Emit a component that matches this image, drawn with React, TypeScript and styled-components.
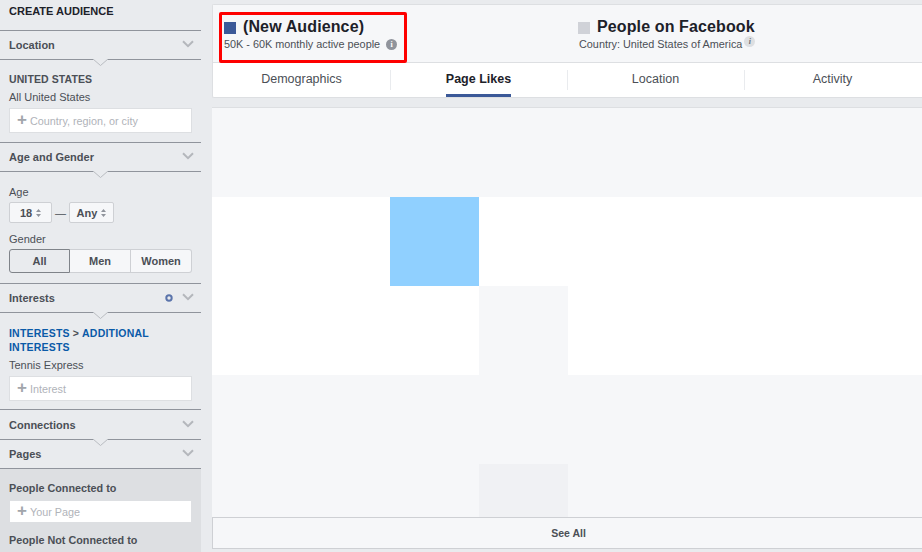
import React from "react";
import styled, { createGlobalStyle } from "styled-components";

const Global = createGlobalStyle`
  html, body { margin: 0; padding: 0; background: #e9ebee; }
  body { font-family: "Liberation Sans", Arial, sans-serif; color: #4b4f56; overflow: hidden; }
  * { box-sizing: border-box; }
`;
const Page = styled.div`
  display: flex; width: 922px; height: 552px; overflow: hidden; background: #e9ebee;
`;
const Sidebar = styled.aside`
  width: 201px; flex: none; height: 552px; overflow: hidden; background: #e9ebee;
`;
const Title = styled.div`
  height: 30px; padding: 4px 9px 0; font-size: 11px; line-height: 14px; font-weight: 700; color: #1d2129;
`;
const SectionHead = styled.div<{ $h?: number }>`
  position: relative; height: ${p => p.$h ?? 30}px; border-top: 1px solid #90949c; border-bottom: 1px solid #90949c;
  display: flex; align-items: center; padding: 0 7px 0 9px; gap: 10px; background: #e9ebee;
  margin-bottom: -1px;
`;
const SectionName = styled.span`
  flex: 1; font-size: 11px; font-weight: 700; color: #4b4f56;
`;
const Notch = styled.svg`
  position: absolute; left: 93px; bottom: -7px; width: 15px; height: 7px; z-index: 1;
`;
const Chevron = styled.svg`
  width: 12px; height: 8px; flex: none; margin-top: -2px;
`;
const Dot = styled.svg`
  width: 8px; height: 8px; flex: none; margin-right: -1px;
`;
const Body = styled.div<{ $pt: number; $h: number; $grey?: boolean }>`
  height: ${p => p.$h}px; padding: ${p => p.$pt}px 9px 0;
  background: ${p => (p.$grey ? "#dddfe2" : "transparent")};
`;
const Caps = styled.div`
  font-size: 10.5px; line-height: 14px; font-weight: 700; letter-spacing: 0.1px; color: #4b4f56;
`;
const Crumbs = styled.div`
  display: flex; flex-wrap: wrap; column-gap: 3px; width: 183px;
  font-size: 10.5px; line-height: 14px; font-weight: 700; letter-spacing: 0.2px; color: #0a5aa8;
`;
const CrumbSep = styled.span`color: #4b4f56;`;
const Label = styled.div<{ $mt?: number; $strong?: boolean }>`
  font-size: ${p => (p.$strong ? 10.8 : 11)}px; line-height: 14px; margin-top: ${p => p.$mt ?? 0}px; color: #4b4f56;
  font-weight: ${p => (p.$strong ? 700 : 400)};
`;
const Input = styled.div<{ $mt?: number; $h?: number }>`
  width: 183px; height: ${p => p.$h ?? 25}px; margin-top: ${p => p.$mt ?? 4}px; background: #fff;
  border: 1px solid #dddfe2;
  display: flex; align-items: center; padding-left: 6px; gap: 2px;
`;
const Plus = styled.span`
  font-size: 17px; font-weight: 700; line-height: 15px; color: #a2a5ab; width: 12px; text-align: center; margin-top: -3px;
`;
const Placeholder = styled.span`
  font-size: 10.8px; color: #b0b3b9;
`;
const AgeRow = styled.div`
  display: flex; align-items: center; margin-top: 3px; height: 21px;
`;
const Select = styled.div<{ $w: number }>`
  width: ${p => p.$w}px; height: 21px; background: #f6f7f9; border: 1px solid #ced0d4; border-radius: 2px;
  display: flex; align-items: center; justify-content: center; gap: 4px;
  font-size: 11px; font-weight: 700; color: #4b4f56;
`;
const Updown = styled.svg`width: 5px; height: 8px;`;
const Dash = styled.span`
  width: 17px; text-align: center; font-size: 11px; color: #4b4f56;
`;
const Segments = styled.div`
  display: flex; width: 183px; height: 24px; margin-top: 3px;
`;
const Segment = styled.div<{ $on?: boolean; $w: number; $first?: boolean; $last?: boolean }>`
  width: ${p => p.$w}px; display: flex; align-items: center; justify-content: center;
  font-size: 11px; font-weight: 700; color: #4b4f56;
  background: ${p => (p.$on ? "#e9ebee" : "#f6f7f9")};
  border: 1px solid ${p => (p.$on ? "#7f8389" : "#ced0d4")};
  border-left-width: ${p => (p.$first ? 1 : 0)}px;
  border-radius: ${p => (p.$first ? "3px 0 0 3px" : p.$last ? "0 3px 3px 0" : "0")};
`;
const Main = styled.main`
  width: 710px; margin-left: 11px; flex: none; padding-top: 4px; display: flex; flex-direction: column;
`;
const TopCard = styled.section`
  height: 94px; border: 1px solid #dddfe2; border-right: 0; border-radius: 2px 0 0 2px; background: #fff;
`;
const Compare = styled.div`
  height: 58px; background: #f6f7f9; border-bottom: 1px solid #dddfe2; display: flex; position: relative;
`;
const OurBlock = styled.div`
  width: 188px; height: 51px; margin: 7px 0 0 6px; border: 3px solid #fe0000; border-radius: 2px; padding: 3px 0 0 2px;
`;
const OtherBlock = styled.div`
  margin: 10px 0 0 171px; padding-top: 3px;
`;
const LegendTop = styled.div`
  display: flex; align-items: center; gap: 7px; height: 20px;
`;
const Swatch = styled.span<{ $c: string }>`
  width: 12px; height: 12px; background: ${p => p.$c}; flex: none;
`;
const Heading = styled.span`
  font-size: 16px; font-weight: 700; color: #1d2129; letter-spacing: 0.12px; margin-top: -2px;
`;
const Sub = styled.div<{ $shift?: boolean }>`
  display: flex; align-items: center; font-size: 10.85px; line-height: 14px; color: #4b4f56; margin-top: -1px; gap: 6px;
  padding-left: ${p => (p.$shift ? 1 : 0)}px;
`;
const Info = styled.span`
  width: 11px; height: 11px; border-radius: 50%; background: #90949c; color: #fff;
  font-size: 8px; line-height: 11px; font-weight: 700; text-align: center; font-family: "Liberation Serif", serif;
`;
const SmallInfo = styled.span`
  width: 11px; height: 11px; border-radius: 50%; background: #dddfe2; color: #6b6f76; margin: -5px 0 0 -4px;
  font-size: 8px; line-height: 11px; font-weight: 700; font-style: italic; text-align: center; font-family: "Liberation Serif", serif;
`;
const Tabs = styled.div`
  display: flex; height: 34px;
`;
const Tab = styled.div<{ $sep?: boolean }>`
  width: 177px; position: relative; display: flex; justify-content: center; padding-top: 8px;
  &::before {
    content: ${p => (p.$sep ? '""' : "none")};
    position: absolute; left: 0; top: 7px; height: 20px; width: 1px; background: #e9ebee;
  }
`;
const TabLabel = styled.span<{ $active?: boolean }>`
  height: 26px; font-size: 12.5px; line-height: 16px;
  font-weight: ${p => (p.$active ? 700 : 400)};
  color: ${p => (p.$active ? "#1d2129" : "#4b4f56")};
  border-bottom: ${p => (p.$active ? "3px solid #3b5998" : "0")};
`;
const Heat = styled.div`
  margin-top: 9px; height: 410px; border-top: 1px solid #dddfe2; display: grid; overflow: hidden;
  grid-template-columns: repeat(8, 89px); grid-auto-rows: 89px; width: 710px; background: #f6f7f9;
`;
const Cell = styled.div<{ $c: string }>`
  background: ${p => p.$c};
`;
const SeeAll = styled.div`
  height: 32px; border: 1px solid #ced0d4; border-right: 0; background: #f6f7f9;
  display: flex; align-items: center; justify-content: center; padding-left: 2px;
  font-size: 10.5px; font-weight: 700; color: #4b4f56;
`;

const Arrow = () => (
  <Chevron viewBox="0 0 12 8"><path d="M1 1.2 L6 6.2 L11 1.2" fill="none" stroke="#b4b7bc" strokeWidth="2" /></Chevron>
);
const Tip = () => (
  <Notch viewBox="0 0 15 7"><path d="M0 0 L7.5 6.5 L15 0 Z" fill="#e9ebee" /><path d="M0 0 L7.5 6.5 L15 0" fill="none" stroke="#b9bcc1" strokeWidth="1" /></Notch>
);
const Head = ({ name, open, h, dot }: { name: string; open?: boolean; h?: number; dot?: boolean }) => (
  <SectionHead $h={h}>
    <SectionName>{name}</SectionName>
    {dot && (
      <Dot viewBox="0 0 8 8"><circle cx="4" cy="4" r="2.7" fill="none" stroke="#5b74ab" strokeWidth="2" /></Dot>
    )}
    <Arrow />
    {open && <Tip />}
  </SectionHead>
);
const Field = ({ text, mt, h }: { text: string; mt?: number; h?: number }) => (
  <Input $mt={mt} $h={h}><Plus>+</Plus><Placeholder>{text}</Placeholder></Input>
);
const UpDown = () => (
  <Updown viewBox="0 0 5 8"><path d="M2.5 0 L5 3 H0 Z M2.5 8 L0 5 H5 Z" fill="#90949c" /></Updown>
);

const W = "#ffffff", G = "#f6f7f9", B = "#90d0ff", D = "#f0f1f4";
const rows = [
  [G, G, G, G, G, G, G, G],
  [W, W, B, W, W, W, W, W],
  [W, W, W, G, W, W, W, W],
  [G, G, G, G, G, G, G, G],
  [G, G, G, D, G, G, G, G],
];
const tabs = ["Demographics", "Page Likes", "Location", "Activity"];

export default function App() {
  return (
    <>
      <Global />
      <Page>
        <Sidebar>
          <Title>CREATE AUDIENCE</Title>
          <Head name="Location" open />
          <Body $pt={13} $h={83}>
            <Caps>UNITED STATES</Caps>
            <Label $mt={4}>All United States</Label>
            <Field text="Country, region, or city" />
          </Body>
          <Head name="Age and Gender" open />
          <Body $pt={14} $h={112}>
            <Label>Age</Label>
            <AgeRow>
              <Select $w={43}>18 <UpDown /></Select>
              <Dash>—</Dash>
              <Select $w={45}>Any <UpDown /></Select>
            </AgeRow>
            <Label $mt={9}>Gender</Label>
            <Segments>
              <Segment $w={61} $on $first>All</Segment>
              <Segment $w={61}>Men</Segment>
              <Segment $w={61} $last>Women</Segment>
            </Segments>
          </Body>
          <Head name="Interests" open dot />
          <Body $pt={14} $h={97}>
            <Crumbs>
              <span>INTERESTS</span>
              <CrumbSep>&gt;</CrumbSep>
              <span>ADDITIONAL</span>
              <span>INTERESTS</span>
            </Crumbs>
            <Label $mt={4}>Tennis Express</Label>
            <Field text="Interest" />
          </Body>
          <Head name="Connections" open h={31} />
          <Head name="Pages" />
          <Body $grey $pt={13} $h={84}>
            <Label $strong>People Connected to</Label>
            <Field text="Your Page" mt={5} h={23} />
            <Label $strong $mt={10}>People Not Connected to</Label>
          </Body>
        </Sidebar>
        <Main>
          <TopCard>
            <Compare>
              <OurBlock>
                <LegendTop>
                  <Swatch $c="#3b5998" />
                  <Heading>(New Audience)</Heading>
                </LegendTop>
                <Sub>50K - 60K monthly active people <Info>i</Info></Sub>
              </OurBlock>
              <OtherBlock>
                <LegendTop>
                  <Swatch $c="#d0d2d8" />
                  <Heading>People on Facebook</Heading>
                </LegendTop>
                <Sub $shift>Country: United States of America <SmallInfo>i</SmallInfo></Sub>
              </OtherBlock>
            </Compare>
            <Tabs>
              {tabs.map((t, i) => (
                <Tab key={t} $sep={i > 0}>
                  <TabLabel $active={t === "Page Likes"}>{t}</TabLabel>
                </Tab>
              ))}
            </Tabs>
          </TopCard>
          <Heat>
            {rows.flat().map((c, i) => <Cell key={i} $c={c} />)}
          </Heat>
          <SeeAll>See All</SeeAll>
        </Main>
      </Page>
    </>
  );
}
